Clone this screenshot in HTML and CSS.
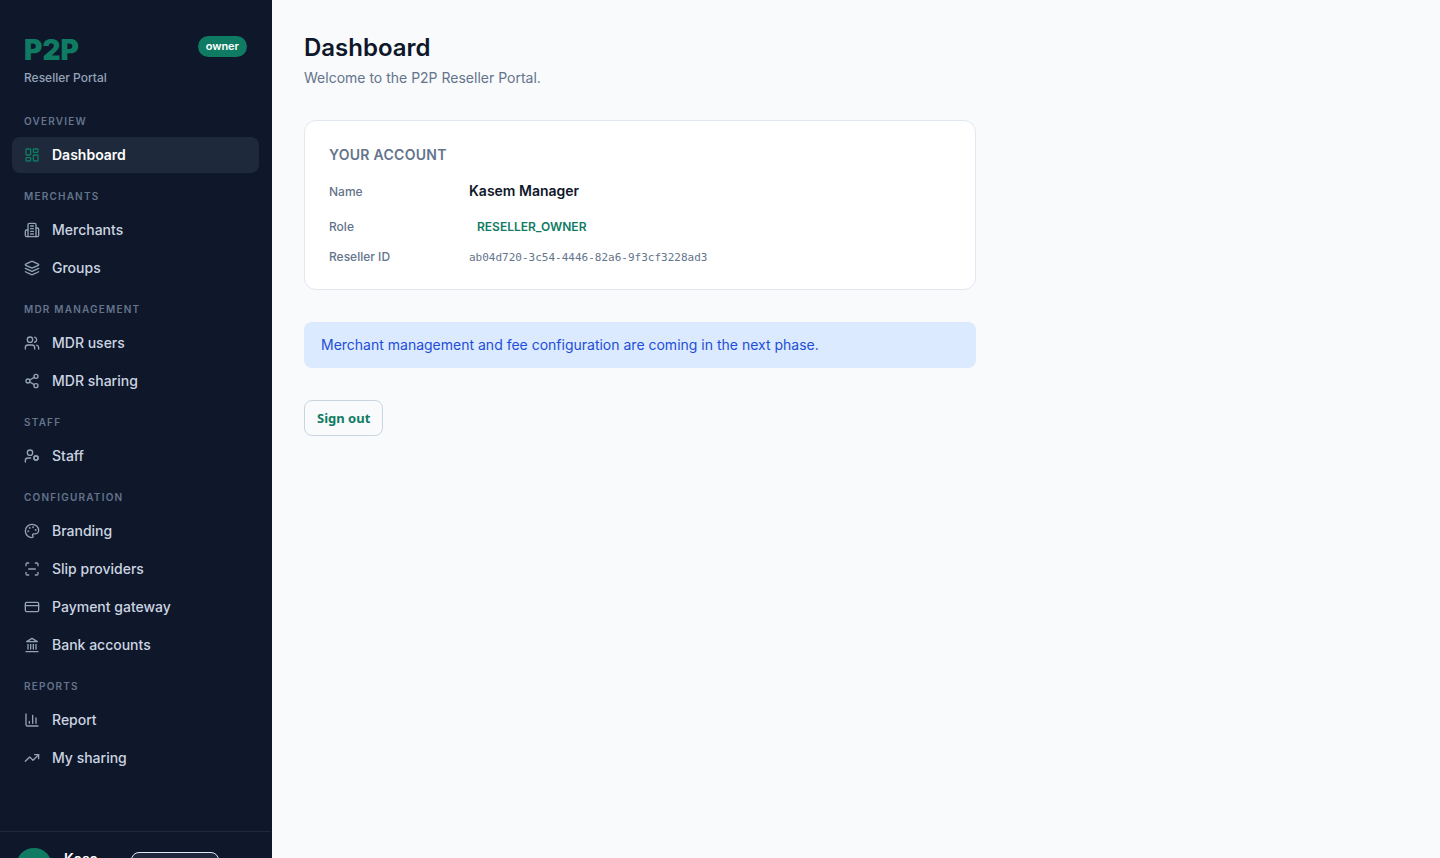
FILE: index.html
```html
<!DOCTYPE html>
<html lang="en">
<head>
    <meta charset="UTF-8">
    <meta name="viewport" content="width=device-width, initial-scale=1.0">
    <title>P2P Reseller Portal</title>
    <link rel="stylesheet" href="styles.css">
</head>
<body>
    <aside class="sidebar">
        <header class="brand">
            <div>
                <div class="brand-name">P2P</div>
                <div class="brand-sub">Reseller Portal</div>
            </div>
            <span class="badge">owner</span>
        </header>
        <nav class="nav">
            <section class="nav-group">
                <h2>Overview</h2>
                <a href="#" class="active">
                    <svg viewBox="0 0 24 24"><rect x="3" y="3" width="7" height="9" rx="1"/><rect x="14" y="3" width="7" height="5" rx="1"/><rect x="14" y="12" width="7" height="9" rx="1"/><rect x="3" y="16" width="7" height="5" rx="1"/></svg>
                    Dashboard
                </a>
            </section>
            <section class="nav-group">
                <h2>Merchants</h2>
                <a href="#">
                    <svg viewBox="0 0 24 24"><path d="M6 22V4a2 2 0 0 1 2-2h8a2 2 0 0 1 2 2v18Z"/><path d="M6 12H4a2 2 0 0 0-2 2v6a2 2 0 0 0 2 2h2"/><path d="M18 9h2a2 2 0 0 1 2 2v9a2 2 0 0 1-2 2h-2"/><path d="M10 6h4M10 10h4M10 14h4M10 18h4"/></svg>
                    Merchants
                </a>
                <a href="#">
                    <svg viewBox="0 0 24 24"><path d="m12.83 2.18a2 2 0 0 0-1.66 0L2.6 6.08a1 1 0 0 0 0 1.83l8.58 3.91a2 2 0 0 0 1.66 0l8.58-3.9a1 1 0 0 0 0-1.83Z"/><path d="m22 12.65-9.17 4.16a2 2 0 0 1-1.66 0L2 12.65"/><path d="m22 17.65-9.17 4.16a2 2 0 0 1-1.66 0L2 17.65"/></svg>
                    Groups
                </a>
            </section>
            <section class="nav-group">
                <h2>MDR management</h2>
                <a href="#">
                    <svg viewBox="0 0 24 24"><path d="M16 21v-2a4 4 0 0 0-4-4H6a4 4 0 0 0-4 4v2"/><circle cx="9" cy="7" r="4"/><path d="M22 21v-2a4 4 0 0 0-3-3.87"/><path d="M16 3.13a4 4 0 0 1 0 7.75"/></svg>
                    MDR users
                </a>
                <a href="#">
                    <svg viewBox="0 0 24 24"><circle cx="18" cy="5" r="3"/><circle cx="6" cy="12" r="3"/><circle cx="18" cy="19" r="3"/><path d="m8.59 13.51 6.83 3.98M15.41 6.51l-6.82 3.98"/></svg>
                    MDR sharing
                </a>
            </section>
            <section class="nav-group">
                <h2>Staff</h2>
                <a href="#">
                    <svg viewBox="0 0 24 24"><circle cx="18" cy="15" r="3"/><circle cx="9" cy="7" r="4"/><path d="M10 15H6a4 4 0 0 0-4 4v2"/><path d="m21.7 16.4-.9-.3M15.2 13.9l-.9-.3M16.6 18.7l.3-.9M19.1 12.2l.3-.9M19.6 18.7l-.4-1M16.8 12.3l-.4-1M14.3 16.6l1-.4M20.7 13.8l1-.4"/></svg>
                    Staff
                </a>
            </section>
            <section class="nav-group">
                <h2>Configuration</h2>
                <a href="#">
                    <svg viewBox="0 0 24 24"><circle cx="13.5" cy="6.5" r=".5"/><circle cx="17.5" cy="10.5" r=".5"/><circle cx="8.5" cy="7.5" r=".5"/><circle cx="6.5" cy="12.5" r=".5"/><path d="M12 2C6.5 2 2 6.5 2 12s4.5 10 10 10c.926 0 1.648-.746 1.648-1.688 0-.437-.18-.835-.437-1.125-.29-.289-.438-.652-.438-1.125a1.64 1.64 0 0 1 1.668-1.668h1.996c3.051 0 5.555-2.503 5.555-5.554C21.965 6.012 17.461 2 12 2z"/></svg>
                    Branding
                </a>
                <a href="#">
                    <svg viewBox="0 0 24 24"><path d="M3 7V5a2 2 0 0 1 2-2h2M17 3h2a2 2 0 0 1 2 2v2M21 17v2a2 2 0 0 1-2 2h-2M7 21H5a2 2 0 0 1-2-2v-2M7 12h10"/></svg>
                    Slip providers
                </a>
                <a href="#">
                    <svg viewBox="0 0 24 24"><rect x="2" y="5" width="20" height="14" rx="2"/><path d="M2 10h20"/></svg>
                    Payment gateway
                </a>
                <a href="#">
                    <svg viewBox="0 0 24 24"><path d="M3 22h18M6 18v-7M10 18v-7M14 18v-7M18 18v-7"/><path d="m12 2 8 5H4Z"/></svg>
                    Bank accounts
                </a>
            </section>
            <section class="nav-group">
                <h2>Reports</h2>
                <a href="#">
                    <svg viewBox="0 0 24 24"><path d="M3 3v16a2 2 0 0 0 2 2h16M18 17V9M13 17V5M8 17v-3"/></svg>
                    Report
                </a>
                <a href="#">
                    <svg viewBox="0 0 24 24"><path d="m22 7-8.5 8.5-5-5L2 17"/><path d="M16 7h6v6"/></svg>
                    My sharing
                </a>
            </section>
        </nav>
        <footer class="user">
            <div class="avatar"></div>
            <div class="user-name">Kase</div>
            <button type="button" class="user-button" aria-label="Sign out"></button>
        </footer>
    </aside>

    <main class="content">
        <h1>Dashboard</h1>
        <p class="intro">Welcome to the P2P Reseller Portal.</p>
        <section class="card">
            <h2>Your account</h2>
            <dl class="details">
                <dt>Name</dt>
                <dd class="name">Kasem Manager</dd>
                <dt>Role</dt>
                <dd class="role">RESELLER_OWNER</dd>
                <dt>Reseller ID</dt>
                <dd class="mono">ab04d720-3c54-4446-82a6-9f3cf3228ad3</dd>
            </dl>
        </section>
        <p class="notice">Merchant management and fee configuration are coming in the next phase.</p>
        <button type="button" class="sign-out">Sign out</button>
    </main>
</body>
</html>
```
FILE: styles.css
```css
* {
    box-sizing: border-box;
}
body {
    margin: 0;
    display: flex;
    height: 100vh;
    overflow: hidden;
    font-family: Inter, sans-serif;
    font-size: 14px;
    line-height: 20px;
    color: #0f172a;
    background-color: #f8fafc;
}
h1, h2, p, dl, dd {
    margin: 0;
}
.sidebar {
    width: 272px;
    flex-shrink: 0;
    overflow: hidden;
    border-right: 1px solid #0f172a;
    background-color: #0f172a;
}
.brand {
    display: flex;
    justify-content: space-between;
    align-items: flex-start;
    padding: 36px 24px 24px;
}
.brand-name {
    font-size: 28px;
    font-weight: 900;
    line-height: 28px;
    color: #0f7b63;
}
.brand-sub {
    margin-top: 4px;
    font-size: 12px;
    font-weight: 500;
    color: #94a3b8;
}
.badge {
    padding: 2px 8px;
    border-radius: 99px;
    font-size: 11px;
    font-weight: 600;
    line-height: 17px;
    color: #fff;
    background-color: #0f7b63;
}
.nav {
    padding: 0 12px 55px;
}
.nav-group {
    display: grid;
    gap: 2px;
    margin-bottom: 14px;
}
.nav-group:last-child {
    margin-bottom: 0;
}
.nav-group h2 {
    padding: 1px 12px 6px;
    font-size: 10px;
    font-weight: 600;
    line-height: 16px;
    letter-spacing: 0.12em;
    text-transform: uppercase;
    color: #64748b;
}
.nav-group a {
    display: flex;
    align-items: center;
    gap: 12px;
    padding: 8px 12px;
    border-radius: 8px;
    font-weight: 500;
    text-decoration: none;
    color: #cbd5e1;
}
.nav-group a.active {
    font-weight: 600;
    color: #fff;
    background-color: #1e293b;
}
.nav-group svg {
    width: 16px;
    height: 16px;
    fill: none;
    stroke: #94a3b8;
    stroke-width: 2;
    stroke-linecap: round;
    stroke-linejoin: round;
}
.nav-group a.active svg {
    stroke: #0f7b63;
}
.user {
    display: flex;
    gap: 12px;
    padding: 16px;
    border-top: 1px solid #1e293b;
}
.avatar {
    width: 36px;
    height: 36px;
    border-radius: 50%;
    background-color: #0f7b63;
}
.user-name {
    width: 55px;
    font-weight: 600;
    line-height: 22px;
    color: #fff;
}
.user-button {
    width: 88px;
    height: 36px;
    margin-top: 4px;
    border: 1px solid #e2e8f0;
    border-radius: 8px;
    background-color: #1e293b;
}
.content {
    flex: 1;
    max-width: 736px;
    padding: 32px;
}
h1 {
    font-size: 24px;
    font-weight: 600;
    line-height: 32px;
}
.intro {
    margin-top: 4px;
    color: #64748b;
}
.card {
    margin: 32px 0;
    padding: 24px 24px 23px;
    border: 1px solid #e2e8f0;
    border-radius: 12px;
    background-color: #fff;
}
.card h2 {
    margin-bottom: 16px;
    font-size: 14px;
    font-weight: 600;
    letter-spacing: 0.02em;
    text-transform: uppercase;
    color: #64748b;
}
.details {
    display: grid;
    grid-template-columns: 128px 1fr;
    gap: 8px 12px;
    align-items: baseline;
}
.details dt {
    font-size: 12px;
    font-weight: 500;
    line-height: 16px;
    color: #64748b;
}
.details .name {
    padding-bottom: 4px;
    font-weight: 600;
}
.details .role {
    padding: 4px 8px;
    font-size: 12px;
    font-weight: 600;
    color: #0f7b63;
}
.details .mono {
    font-family: "DejaVu Sans Mono", monospace;
    font-size: 11px;
    line-height: 16px;
    color: #64748b;
}
.notice {
    margin-bottom: 32px;
    padding: 13px 17px;
    border-radius: 8px;
    color: #1d4ed8;
    background-color: #dbeafe;
}
.sign-out {
    height: 36px;
    padding: 0 12px;
    border: 1px solid #cbd5e1;
    border-radius: 8px;
    font-family: "Noto Sans", sans-serif;
    font-size: 13px;
    font-weight: 700;
    color: #0f7b63;
    background-color: transparent;
    cursor: pointer;
}
```
